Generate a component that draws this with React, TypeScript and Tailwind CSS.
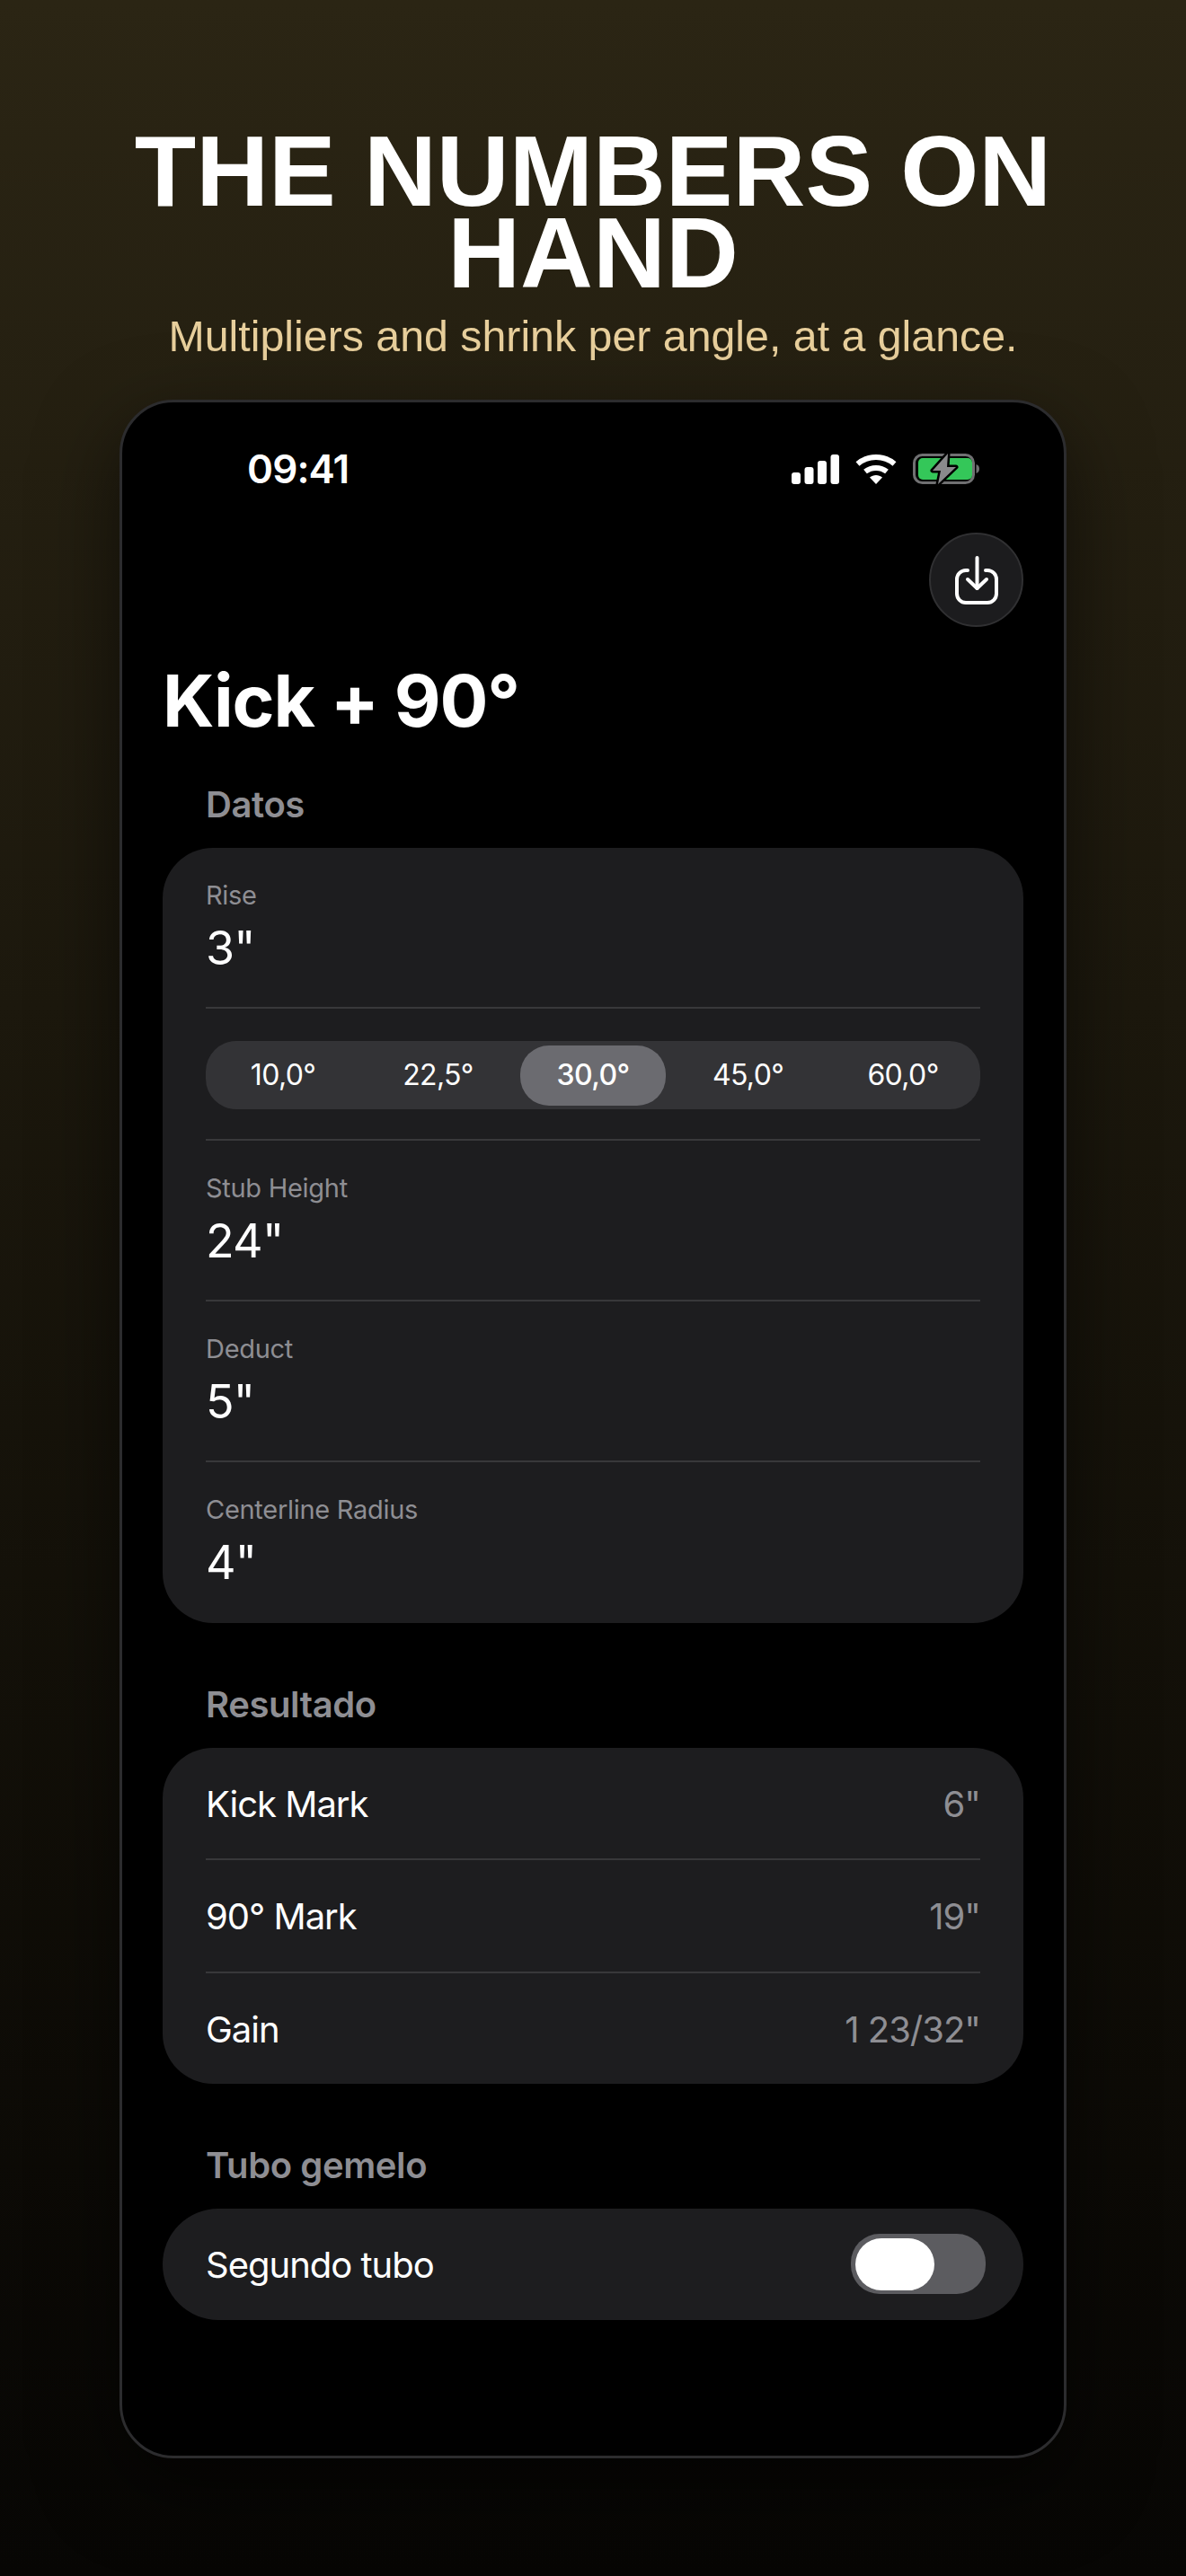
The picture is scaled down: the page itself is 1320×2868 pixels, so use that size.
function Signal() {
  return (
    <svg width="53" height="33" viewBox="0 0 53 33" fill="#fff">
      <rect x="0" y="20" width="10" height="13" rx="3" />
      <rect x="14.500" y="14" width="10" height="19" rx="3" />
      <rect x="29" y="7" width="10" height="26" rx="3" />
      <rect x="43.500" y="0" width="9.500" height="33" rx="3" />
    </svg>
  );
}

function Wifi() {
  return (
    <svg width="46" height="34" viewBox="0 0 46 34" fill="none">
      <path d="M2.500 11.500C14 1.500 32 1.500 43.500 11.500" stroke="#fff" strokeWidth="6" />
      <path d="M11 20C18 14.500 28 14.500 35 20" stroke="#fff" strokeWidth="6" />
      <path d="M16 26.500C20 23 26 23 30 26.500L23 34Z" fill="#fff" />
    </svg>
  );
}

function Battery() {
  return (
    <svg width="74" height="36" viewBox="0 0 74 36" fill="none">
      <rect x="1.500" y="2.500" width="66" height="31" rx="9" stroke="#707072" strokeWidth="3" />
      <rect x="6" y="6" width="60" height="24" rx="5" fill="#34c759" />
      <path d="M70.500 13C72.800 13.500 74 15.500 74 18C74 20.500 72.800 22.500 70.500 23Z" fill="#707072" />
      <path d="M39 1L22 20H31L28 35L48 16H38Z" fill="#000" stroke="#000" strokeWidth="5" strokeLinejoin="round" />
      <path d="M39 1L22 20H31L28 35L48 16H38Z" fill="#8a8a8c" />
    </svg>
  );
}

function ShareIcon() {
  return (
    <svg className="mt-[1px]" width="48" height="54" viewBox="0 0 48 54" fill="none" stroke="#fff" strokeWidth="4" strokeLinecap="round" strokeLinejoin="round">
      <path d="M14 16H12C6.500 16 2 20.500 2 26V42C2 47.500 6.500 52 12 52H36C41.500 52 46 47.500 46 42V26C46 20.500 41.500 16 36 16H34" />
      <path d="M24.500 2V36" />
      <path d="M14 26L24.500 36L35 26" />
    </svg>
  );
}

function Field({ label, value, last }: { label: string; value: string; last?: boolean }) {
  return (
    <div className={`mx-12 flex flex-col pt-[35px] ${last ? "h-[179px]" : "h-[177px]"}`}>
      <div className="text-[29px] leading-[36px] tracking-[-0.01em] text-[#8e8e93]">{label}</div>
      <div className="mt-[10px] text-[52px] leading-[62px] tracking-[-0.015em] text-white">{value}</div>
    </div>
  );
}

function Divider() {
  return <div className="mx-12 h-[2px] bg-[#38383a]" />;
}

function Angle({ label, active }: { label: string; active?: boolean }) {
  return (
    <div className={`flex h-[67px] w-[162px] items-center justify-center rounded-[32px] text-[32px] tracking-[-0.02em] text-white ${active ? "bg-[#6b6b70] font-medium" : ""}`}>
      {label}
    </div>
  );
}

function ResultRow({ label, value }: { label: string; value: string }) {
  return (
    <div className="mx-12 flex h-[123.33px] items-center justify-between pt-[3px] text-[40px] tracking-[-0.025em]">
      <span className="text-white">{label}</span>
      <span className="text-[#8e8e93]">{value}</span>
    </div>
  );
}

function SectionTitle({ children }: { children: string }) {
  return <div className="px-12 text-[40px] font-semibold leading-[48px] tracking-[-0.01em] text-[#8e8e93]">{children}</div>;
}

export default function App() {
  return (
    <div className="flex h-[2868px] w-[1320px] flex-col items-center overflow-hidden bg-gradient-to-b from-[#2b2514] to-[#070604] pt-[145px]">
      <h1 className="w-[1100px] text-center font-['Liberation_Sans',sans-serif] text-[112px] font-bold leading-[91px] text-white">
        THE NUMBERS ON HAND
      </h1>
      <p className="mt-[18px] font-['Liberation_Sans',sans-serif] text-[48.3px] leading-[58px] text-[#e8cf9c]">
        Multipliers and shrink per angle, at a glance.
      </p>
      <div className="mt-[42px] flex h-[2292px] w-[1054px] flex-col rounded-[60px] border-[3px] border-[#2c2c2e] bg-black font-['Inter',sans-serif] shadow-[0_30px_90px_rgba(0,0,0,0.55)]">
        <div className="flex h-[145px] items-center justify-between pl-[139px] pr-[94px] pt-[3px]">
          <span className="text-[44px] font-semibold leading-[52px] tracking-[-0.02em] text-white">09:41</span>
          <div className="flex items-center gap-[18px]">
            <Signal />
            <Wifi />
            <Battery />
          </div>
        </div>
        <div className="flex justify-end pr-[45px]">
          <div className="flex h-[105px] w-[105px] items-center justify-center rounded-full border-2 border-[#303032] bg-[#1c1c1e]">
            <ShareIcon />
          </div>
        </div>
        <h2 className="mt-[34px] px-[45px] text-[80px] font-bold leading-[96px] tracking-[-0.014em] text-white">Kick + 90°</h2>
        <div className="mt-[44px] flex flex-col px-[45px]">
          <SectionTitle>Datos</SectionTitle>
          <div className="mt-[24px] rounded-[56px] bg-[#1d1d1f]">
            <Field label="Rise" value="3&quot;" />
            <Divider />
            <div className="mx-12 flex h-[145px] items-center pt-[3px]">
              <div className="flex h-[76px] w-full items-center justify-between rounded-[34px] bg-[#333336] px-[5px]">
                <Angle label="10,0°" />
                <Angle label="22,5°" />
                <Angle label="30,0°" active />
                <Angle label="45,0°" />
                <Angle label="60,0°" />
              </div>
            </div>
            <Divider />
            <Field label="Stub Height" value="24&quot;" />
            <Divider />
            <Field label="Deduct" value="5&quot;" />
            <Divider />
            <Field label="Centerline Radius" value="4&quot;" last />
          </div>
          <div className="mt-[67px]">
            <SectionTitle>Resultado</SectionTitle>
          </div>
          <div className="mt-[24px] rounded-[56px] bg-[#1d1d1f]">
            <ResultRow label="Kick Mark" value="6&quot;" />
            <Divider />
            <ResultRow label="90° Mark" value="19&quot;" />
            <Divider />
            <ResultRow label="Gain" value="1 23/32&quot;" />
          </div>
          <div className="mt-[67px]">
            <SectionTitle>Tubo gemelo</SectionTitle>
          </div>
          <div className="mt-[24px] flex h-[124px] items-center justify-between rounded-[62px] bg-[#1d1d1f] pl-12 pr-[42px]">
            <span className="pt-[3px] text-[40px] tracking-[-0.025em] text-white">Segundo tubo</span>
            <div className="flex h-[67px] w-[150px] items-center rounded-[32px] bg-[#5c5c60] px-[5px]">
              <div className="h-[58px] w-[88px] rounded-[29px] bg-white" />
            </div>
          </div>
        </div>
      </div>
    </div>
  );
}
